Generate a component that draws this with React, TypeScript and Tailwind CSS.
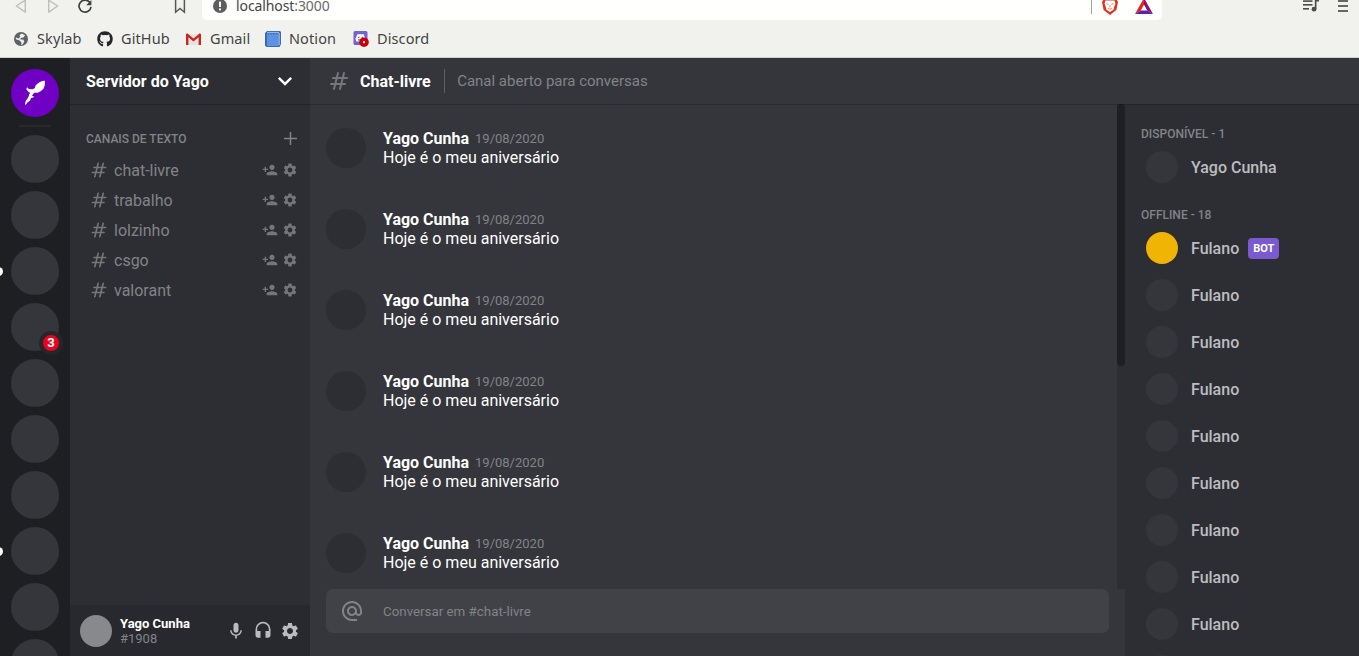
import React from "react";
import {
  MdAlternateEmail,
  MdExpandMore,
  MdHeadset,
  MdMic,
  MdPersonAdd,
  MdSettings,
} from "react-icons/md";
import { FaGithub } from "react-icons/fa";

const HashIcon = ({ className }: { className: string }) => (
  <svg
    viewBox="0 0 24 24"
    fill="none"
    stroke="currentColor"
    strokeWidth="2"
    strokeLinecap="round"
    className={className}
  >
    <path d="M7 20l4-16m2 16l4-16M6 9h14M4 15h14" />
  </svg>
);

const PlusIcon = () => (
  <svg viewBox="0 0 13 13" className="size-[13px] shrink-0" fill="none" stroke="#828386" strokeWidth="1.5">
    <path d="M6.5 0v13M0 6.5h13" />
  </svg>
);

const BackIcon = () => (
  <svg viewBox="0 0 12 16" className="h-4 w-3 shrink-0" fill="none" stroke="#bdbebb" strokeWidth="1.4" strokeLinejoin="round">
    <path d="M10.300 2.200v12L1.300 8z" />
  </svg>
);

const ForwardIcon = () => (
  <svg viewBox="0 0 12 16" className="h-4 w-3 shrink-0" fill="none" stroke="#bdbebb" strokeWidth="1.4" strokeLinejoin="round">
    <path d="M1.700 2.200v12L10.700 8z" />
  </svg>
);

const ReloadIcon = () => (
  <svg viewBox="0 0 16 16" className="size-4 shrink-0" fill="none" stroke="#3f4040" strokeWidth="1.7">
    <path d="M12.6 4.2A6 6 0 1 0 14 8.8" />
    <path d="M14.4 2v5.2H9.2z" fill="#3f4040" stroke="none" />
  </svg>
);

const BookmarkIcon = () => (
  <svg viewBox="0 0 12 16" className="h-4 w-3 shrink-0" fill="none" stroke="#555655" strokeWidth="1.5">
    <path d="M1.6 1h8.8v13.2L6 10.4l-4.4 3.8z" />
  </svg>
);

const InfoIcon = () => (
  <svg viewBox="0 0 14 14" className="size-3.5 shrink-0">
    <circle cx="7" cy="7" r="7" fill="#5d5e60" />
    <rect x="6" y="2.6" width="2" height="5.4" fill="#fff" />
    <rect x="6" y="9.4" width="2" height="2" fill="#fff" />
  </svg>
);

const LionIcon = () => (
  <svg viewBox="0 0 16 19" className="h-[19px] w-4 shrink-0">
    <path d="M3 1h10l3 5-1.600 8L8 19l-6.400-5L0 6z" fill="#e1341c" />
    <path d="M3.400 4.500h9.200l.8 3-1.400 4-.5 2.300L8 16 4.500 13.800 4 11.500l-1.400-4z" fill="#fff" />
    <path d="M4.600 7.600l2 .9M11.400 7.600l-2 .9M8 9v2.500M6 12l2 1.400 2-1.400" stroke="#e58a5c" strokeWidth="1" fill="none" />
  </svg>
);

const TriangleIcon = () => (
  <svg viewBox="0 0 18 16" className="h-4 w-[18px] shrink-0">
    <path d="M9 0L0 16l5.800-3.600L9 6.400z" fill="#e62415" />
    <path d="M9 0l9 16-5.800-3.600L9 6.400z" fill="#8b1070" />
    <path d="M0 16h18l-5.800-3.600H5.800z" fill="#5c22a8" />
  </svg>
);

const PlaylistIcon = () => (
  <svg viewBox="0 0 16 16" className="size-4 shrink-0" fill="#4b4c4b">
    <rect x="0" y="3.300" width="9.500" height="1.600" />
    <rect x="0" y="7" width="9.500" height="1.600" />
    <rect x="0" y="11" width="6" height="1.600" />
    <path d="M11.800 2.800H16v1.700h-2.500V12h-1.700z" />
    <circle cx="11" cy="12.200" r="2.400" />
  </svg>
);

const MenuIcon = () => (
  <svg viewBox="0 0 10 16" className="h-4 w-2.5 shrink-0" fill="#656665">
    <rect y="3" width="10" height="2" />
    <rect y="8" width="10" height="2" />
    <rect y="13" width="10" height="2" />
  </svg>
);

const GlobeIcon = () => (
  <svg viewBox="0 0 14 14" className="size-3.5">
    <circle cx="7" cy="7" r="7" fill="#5d6167" />
    <path d="M7.600 1.600l3.600 1.600-1.800 2.300-2.700.6-.4 1.300 3 .2 1 2.200-1.800 2.600-1.300.5.200-2.600-2.300-2.100-3.200-1-.1-1.700 3 .9 1.400-1.700-.8-1.500z" fill="#eef0ee" />
  </svg>
);

const GmailIcon = () => (
  <svg viewBox="0 0 15 12" className="h-3 w-[15px]">
    <path d="M1 1h13v11H1z" fill="#e6e4e2" />
    <path d="M0 12V1.200L1.200.3 7.500 5.600 13.800.3 15 1.200V12h-2.400V4.200l-5.100 4.200-5.100-4.200V12z" fill="#c9271e" />
  </svg>
);

const NotebookIcon = () => (
  <svg viewBox="0 0 16 16" className="size-4">
    <path d="M2 0h13l1 1v12l-1.500 3H1.500L0 14.500V2z" fill="#3c68b4" />
    <path d="M2 2.300h11.700V15H2z" fill="#5b93e3" />
    <path d="M14.200 2v12" stroke="#a9c5ed" strokeWidth="1" />
    <path d="M2 1.400h12" stroke="#bdd2f0" strokeWidth=".8" />
    <path d="M3 3h10" stroke="#3358a4" strokeWidth="1" strokeDasharray="1 1.500" />
  </svg>
);

const DiscordIcon = () => (
  <svg viewBox="0 0 16 16" className="size-4">
    <path d="M2 0h11a1.500 1.500 0 0 1 1.500 1.500V14H2a1.500 1.500 0 0 1-1.500-1.500v-11A1.500 1.500 0 0 1 2 0z" fill="#7463ce" />
    <path d="M4.300 3.300h6.400L12.300 8l-.7 2.500H3.300L2.500 8z" fill="#fff" />
    <path d="M5 6.300h1.500M8.600 6.300h1.500M5 8.800h3" stroke="#7463ce" strokeWidth="1.300" />
    <circle cx="11" cy="11.200" r="4.800" fill="#cb0008" />
    <circle cx="11" cy="11.200" r="1.100" fill="#fff" />
  </svg>
);

const BirdLogo = () => (
  <svg viewBox="33 207 144 144" className="size-12" fill="#fff">
    <path d="M135 242L134 257L130 267L122 274L113 278L103 278L99 283L96 287L103 290L98 293L93 294L90 302L83 307L77 315L75 313L77 303L83 295L86 289L88 282L91 279L85 275L79 268L81 262L87 267L97 268L104 265L107 256L116 248L126 243Z" />
  </svg>
);

const bookmarks: { label: string; icon: React.ReactNode; cell: string; slot: string }[] = [
  { label: "Skylab", icon: <GlobeIcon />, cell: "w-[83px]", slot: "w-[23px]" },
  { label: "GitHub", icon: <FaGithub className="size-4 text-[#24262a]" />, cell: "w-[89px]", slot: "w-6" },
  { label: "Gmail", icon: <GmailIcon />, cell: "w-[79px]", slot: "w-6" },
  { label: "Notion", icon: <NotebookIcon />, cell: "w-[88px]", slot: "w-6" },
  { label: "Discord", icon: <DiscordIcon />, cell: "w-[90px]", slot: "w-6" },
];

function BrowserChrome() {
  return (
    <div className="flex h-[58px] shrink-0 flex-col border-b border-[#cfd0d0] bg-[#f1f2ee] font-['Noto_Sans',sans-serif] text-[#444]">
      <div className="flex h-5 shrink-0 overflow-hidden">
        <div className="-mt-0.5 flex w-[202px] shrink-0 items-start pl-[15px]">
          <BackIcon />
          <span className="w-5" />
          <ForwardIcon />
          <span className="w-[18px]" />
          <ReloadIcon />
          <span className="w-[81px]" />
          <BookmarkIcon />
        </div>
        <div className="flex w-[960px] shrink-0 rounded-b-[5px] bg-[#fffffd]">
          <div className="-mt-px flex items-start pl-[11px]">
            <InfoIcon />
            <span className="mt-px ml-[9px] text-[14px] leading-3 tracking-[-0.1px]">
              localhost<span className="text-[#6a6a6a]">:3000</span>
            </span>
          </div>
          <div className="ml-auto flex items-start pr-[9px]">
            <span className="h-3.5 w-px bg-[#a3a3a1]" />
            <span className="-mt-1 ml-[10px]">
              <LionIcon />
            </span>
            <span className="-mt-0.5 ml-[17px]">
              <TriangleIcon />
            </span>
          </div>
        </div>
        <div className="-mt-[3px] ml-auto flex gap-[19px] pr-[11px]">
          <PlaylistIcon />
          <MenuIcon />
        </div>
      </div>
      <div className="flex h-[37px] items-center pl-3.5">
        {bookmarks.map((b) => (
          <div key={b.label} className={`flex shrink-0 items-center ${b.cell}`}>
            <span className={`flex shrink-0 items-center ${b.slot}`}>{b.icon}</span>
            <span className="pb-0.5 text-[14.5px] leading-5 tracking-[0.1px]">{b.label}</span>
          </div>
        ))}
      </div>
    </div>
  );
}

const servers: { notify?: boolean; mentions?: number }[] = [
  {},
  {},
  { notify: true },
  { mentions: 3 },
  {},
  {},
  {},
  { notify: true },
  {},
  {},
];

function ServerList() {
  return (
    <nav className="flex w-[70px] shrink-0 flex-col items-center overflow-hidden bg-[#1e1f23] pt-[11px]">
      <div className="size-12 shrink-0 rounded-full bg-[#6f00c4]">
        <BirdLogo />
      </div>
      <div className="mt-2 mb-2 h-0.5 w-8 shrink-0 bg-[#28292d]" />
      <div className="flex flex-col gap-2">
        {servers.map((s, i) => (
          <div key={i} className="relative size-12 shrink-0 rounded-full bg-[#35363b]">
            {s.notify && <span className="absolute top-5 -left-[17px] size-[9px] rounded-full bg-white" />}
            {s.mentions && (
              <span className="absolute -right-1 -bottom-1 flex size-6 items-center justify-center rounded-full border-4 border-[#25262a] bg-[#e80322] text-[13px] font-bold text-white">
                {s.mentions}
              </span>
            )}
          </div>
        ))}
      </div>
    </nav>
  );
}

const channels = ["chat-livre", "trabalho", "lolzinho", "csgo", "valorant"];

function ChannelPanel() {
  return (
    <aside className="flex w-60 shrink-0 flex-col bg-[#2d2e33]">
      <header className="z-10 flex h-[46px] shrink-0 items-center justify-between pr-[11px] pl-4 shadow-[0_1px_0_0_rgba(0,0,0,0.2)]">
        <h1 className="pt-0.5 text-base font-bold text-white">Servidor do Yago</h1>
        <MdExpandMore className="size-7 text-white" />
      </header>
      <div className="flex flex-1 flex-col pt-6 pr-3 pl-4">
        <div className="flex h-[21px] items-center justify-between pr-px">
          <span className="pt-px text-[12px] font-medium text-[#828386]">CANAIS DE TEXTO</span>
          <PlusIcon />
        </div>
        <ul className="mt-1.5 flex flex-col">
          {channels.map((c) => (
            <li key={c} className="flex h-[30px] items-center pl-[3px] text-[#74767a]">
              <HashIcon className="size-5" />
              <span className="ml-[5px] pt-0.5 text-base text-[#828386]">{c}</span>
              <MdPersonAdd className="ml-auto size-4" />
              <MdSettings className="ml-1 size-4" />
            </li>
          ))}
        </ul>
      </div>
      <footer className="flex h-[51px] shrink-0 items-center bg-[#28292e] pr-2.5 pl-2.5">
        <div className="size-8 rounded-full bg-[#88898c]" />
        <div className="ml-2 flex flex-col">
          <strong className="text-[13px] leading-[15px] font-bold text-white">Yago Cunha</strong>
          <span className="text-[13px] leading-[15px] text-[#828386]">#1908</span>
        </div>
        <div className="ml-auto flex items-center gap-[7px] text-[#b9bbbe]">
          <MdMic className="size-5" />
          <MdHeadset className="size-5" />
          <MdSettings className="size-5" />
        </div>
      </footer>
    </aside>
  );
}

function Messages() {
  return (
    <div className="flex h-[485px] shrink-0 overflow-hidden">
      <div className="flex flex-1 flex-col gap-[41px] pt-6 pl-4">
        {Array.from({ length: 6 }, (_, i) => (
          <article key={i} className="flex h-10 shrink-0">
            <div className="size-10 rounded-full bg-[#2d2e33]" />
            <div className="ml-[17px] flex flex-col pt-px">
              <div className="flex h-[19px] items-center">
                <strong className="text-base leading-[19px] font-bold text-white">Yago Cunha</strong>
                <time className="ml-1.5 text-[13px] leading-[19px] text-[#828386]">19/08/2020</time>
              </div>
              <p className="text-base leading-[19px] text-white">Hoje é o meu aniversário</p>
            </div>
          </article>
        ))}
      </div>
      <div className="w-2 bg-[#2d2e33]">
        <div className="h-[262px] rounded bg-[#1e1f23]" />
      </div>
    </div>
  );
}

const offline = Array.from({ length: 9 }, (_, i) => ({ name: "Fulano", bot: i === 0 }));

function Member({ name, bot }: { name: string; bot?: boolean }) {
  return (
    <div className="flex h-8 shrink-0 items-center pl-[5px]">
      <div className={bot ? "size-8 rounded-full bg-[#f0b405]" : "size-8 rounded-full bg-[#35363b]"} />
      <span className="ml-[13px] pt-0.5 text-base font-medium text-[#bcbdc0]">{name}</span>
      {bot && (
        <span className="mt-px ml-[9px] flex h-[21px] w-[31px] items-center justify-center rounded bg-[#7b5ad0] text-[11px] leading-[21px] font-bold text-white">
          BOT
        </span>
      )}
    </div>
  );
}

function MemberList() {
  return (
    <aside className="flex w-[234px] shrink-0 flex-col overflow-hidden bg-[#2d2e33] pt-[23px] pl-4">
      <span className="text-[12px] leading-[14px] font-medium text-[#828386]">DISPONÍVEL - 1</span>
      <div className="mt-2.5 shrink-0">
        <Member name="Yago Cunha" />
      </div>
      <span className="mt-[25px] text-[12px] leading-[14px] font-medium text-[#828386]">OFFLINE - 18</span>
      <div className="mt-2.5 flex shrink-0 flex-col gap-[15px]">
        {offline.map((m, i) => (
          <Member key={i} name={m.name} bot={m.bot} />
        ))}
        <div className="pl-[5px]">
          <div className="size-8 rounded-full bg-[#35363b]" />
        </div>
      </div>
    </aside>
  );
}

export default function App() {
  return (
    <div className="flex h-[656px] w-[1359px] flex-col overflow-hidden font-['Roboto',sans-serif]">
      <BrowserChrome />
      <div className="flex h-[598px] overflow-hidden">
        <ServerList />
        <ChannelPanel />
        <section className="flex flex-1 flex-col bg-[#35363b]">
          <header className="z-10 flex h-[46px] shrink-0 items-center pl-[17px] shadow-[0_1px_0_0_rgba(0,0,0,0.2)]">
            <HashIcon className="size-6 text-[#74767a]" />
            <h2 className="ml-[9px] pt-0.5 text-base font-bold text-white">Chat-livre</h2>
            <div className="ml-[13px] h-6 w-px bg-[#5f6064]" />
            <span className="ml-[12.5px] text-[15px] text-[#828386]">Canal aberto para conversas</span>
          </header>
          <div className="flex min-h-0 flex-1">
            <main className="flex flex-1 flex-col">
              <Messages />
              <div className="mr-4 ml-4 flex h-11 shrink-0 items-center rounded-[7px] bg-[#414148] pl-3.5">
                <MdAlternateEmail className="size-6 text-[#828386]" />
                <span className="ml-[19px] pt-px text-[13.333px] text-[#828386]">Conversar em #chat-livre</span>
              </div>
            </main>
            <MemberList />
          </div>
        </section>
      </div>
    </div>
  );
}
